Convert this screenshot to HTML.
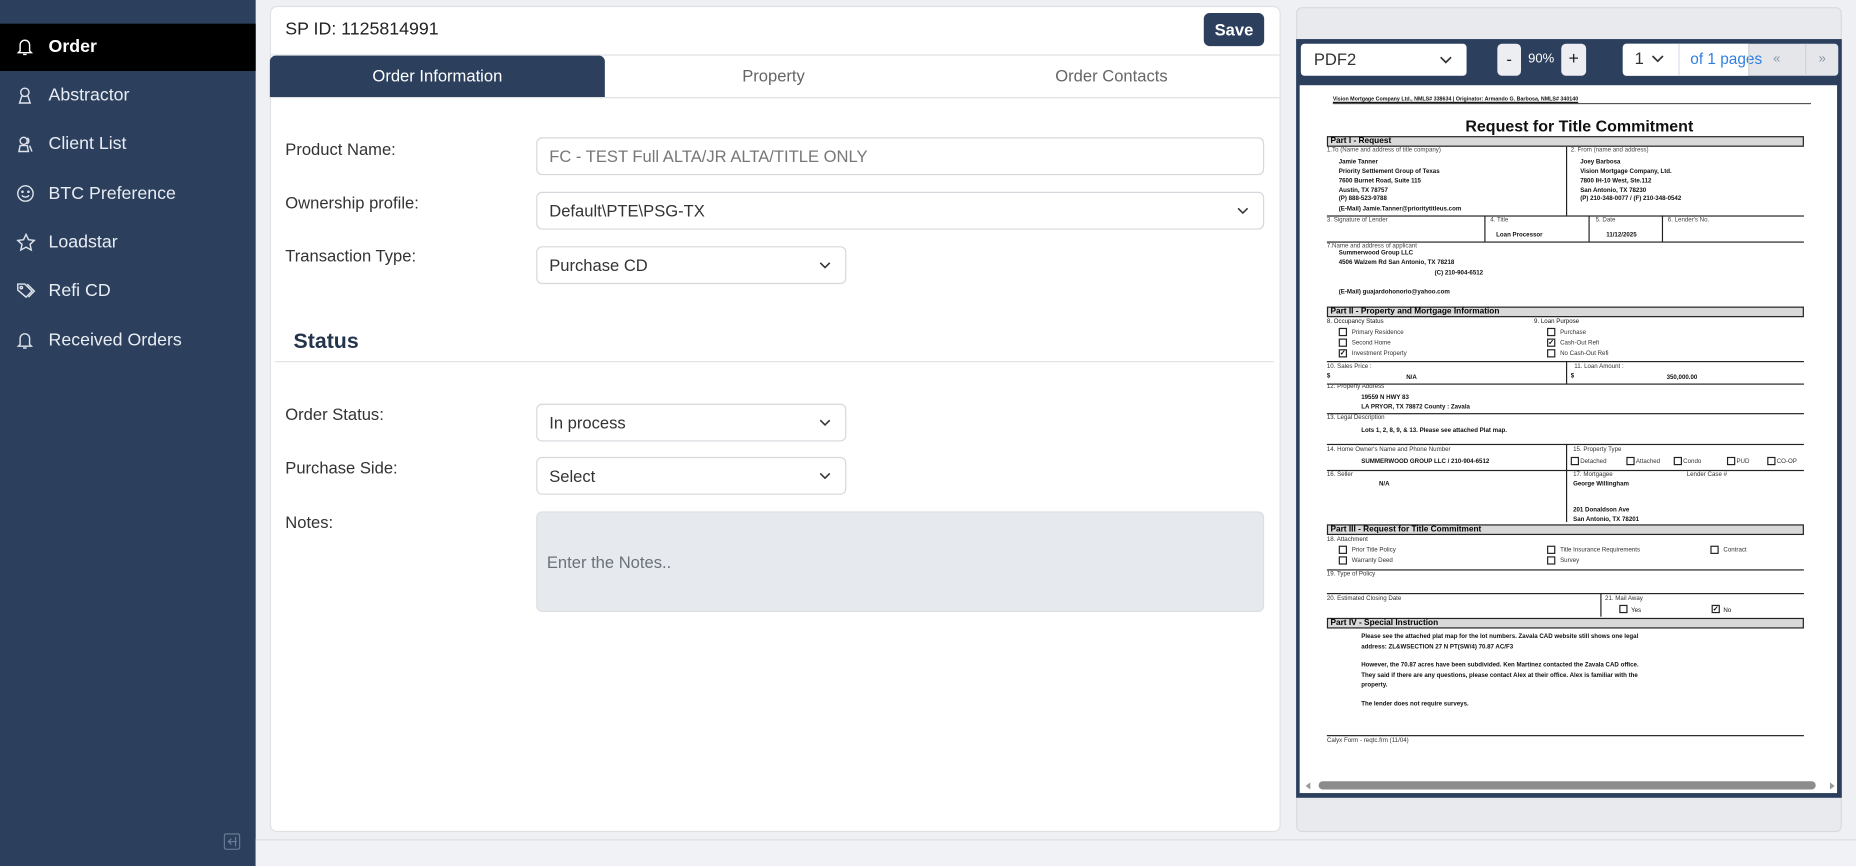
<!DOCTYPE html>
<html><head><meta charset="utf-8"><style>
*{box-sizing:border-box;margin:0;padding:0}
html,body{width:1856px;height:866px;overflow:hidden;background:#eef0f3}
#w{position:absolute;left:0;top:0;width:1568px;height:732px;transform:scale(1.18367);transform-origin:0 0;font-family:"Liberation Sans",sans-serif;}
.a{position:absolute}
.side{left:0;top:0;width:216px;height:732px;background:#2c405e}
.nav{left:0;width:216px;height:40px;color:#e9edf3;font-size:15px;line-height:40px;padding-left:41px}
.nav svg{position:absolute;left:14px;top:12px}
.card{left:228px;top:5px;width:854px;height:698px;background:#fff;border:1px solid #dfe1e4;border-radius:6px}
.lbl{font-size:14px;color:#333;left:241px}
.inp{left:453px;border:1px solid #d5d8dc;border-radius:5px;background:#fff;font-size:14px;color:#333;padding-left:10px;line-height:30px;height:32px}
.chev{position:absolute;right:12px;top:12px}
.t{position:absolute;font-family:"Liberation Sans",sans-serif;font-size:5.2px;color:#111;white-space:nowrap;line-height:6px}
.b{font-weight:bold}
.hl{position:absolute;height:1px;background:#222}
.vl{position:absolute;width:1px;background:#222}
.bar{position:absolute;left:1121px;width:403px;height:9px;background:#d9d9d9;border:1px solid #222;font-size:7px;font-weight:bold;line-height:7px;padding-left:2px;font-family:"Liberation Sans",sans-serif}
.cb{position:absolute;width:7px;height:7px;border:0.8px solid #222;font-size:6px;line-height:6px;text-align:center;font-weight:bold}
</style></head><body><div id="w">
<div class="a side"></div>
<div class="a nav" style="top:20px;background:#000;color:#fff;font-weight:bold"><svg width="14" height="16" viewBox="0 0 14 16" fill="none" stroke="#fff" stroke-width="1.2"><path d="M3 11V6a4 4 0 018 0v5l1.5 1.5h-11z"/><path d="M5.5 14h3"/></svg>Order</div>
<div class="a nav" style="top:61px"><svg width="14" height="16" viewBox="0 0 14 16" fill="none" stroke="#dfe4ec" stroke-width="1.2"><circle cx="7" cy="5" r="3.5"/><path d="M4.5 8l-1 3-1 3h9l-1-3-1-3"/></svg>Abstractor</div>
<div class="a nav" style="top:102px"><svg width="16" height="16" viewBox="0 0 16 16" fill="none" stroke="#dfe4ec" stroke-width="1.2"><circle cx="6" cy="5" r="3"/><path d="M2 14l1-5h6l1 5z"/><path d="M9 2.5a3 3 0 010 5M11 9l2 5"/></svg>Client List</div>
<div class="a nav" style="top:144px"><svg width="15" height="15" viewBox="0 0 15 15" fill="none" stroke="#dfe4ec" stroke-width="1.2"><circle cx="7.5" cy="7.5" r="6.5"/><path d="M4.5 9a3.5 3 0 006 0"/><circle cx="5" cy="6" r=".5"/><circle cx="10" cy="6" r=".5"/></svg>BTC Preference</div>
<div class="a nav" style="top:185px"><svg width="16" height="16" viewBox="0 0 16 16" fill="none" stroke="#dfe4ec" stroke-width="1.2"><path d="M8 1l2.1 4.5 4.9.6-3.6 3.3 1 4.8L8 11.8 3.6 14.2l1-4.8L1 6.1l4.9-.6z"/></svg>Loadstar</div>
<div class="a nav" style="top:226px"><svg width="16" height="16" viewBox="0 0 16 16" fill="none" stroke="#dfe4ec" stroke-width="1.2"><path d="M1 2h6l6 6-5 5-7-6z"/><path d="M9 2l6 6-5 5"/><circle cx="4" cy="5" r="1"/></svg>Refi CD</div>
<div class="a nav" style="top:268px"><svg width="14" height="16" viewBox="0 0 14 16" fill="none" stroke="#dfe4ec" stroke-width="1.2"><path d="M3 11V6a4 4 0 018 0v5l1.5 1.5h-11z"/><path d="M5.5 14h3"/></svg>Received Orders</div>
<svg class="a" style="left:189px;top:704px" width="14" height="14" viewBox="0 0 14 14" fill="none" stroke="#6c7f99" stroke-width="1"><rect x=".5" y=".5" width="13" height="13" rx="1.5"/><path d="M11 7H4M6.5 4.5L4 7l2.5 2.5M10 3v8"/></svg>

<div class="a" style="left:216px;top:709px;width:1352px;height:23px;background:#f1f2f5;border-top:1px solid #dcdee2"></div>
<div class="a card"></div>
<div class="a" style="left:241px;top:16px;font-size:15px;color:#222">SP ID: 1125814991</div>
<div class="a" style="left:1017px;top:11px;width:51px;height:28px;background:#2c405e;border-radius:5px;color:#fff;font-weight:bold;font-size:14px;text-align:center;line-height:28px">Save</div>
<div class="a" style="left:229px;top:46px;width:852px;height:1px;background:#dfe1e4"></div>
<div class="a" style="left:229px;top:82px;width:852px;height:1px;background:#dfe1e4"></div>
<div class="a" style="left:228px;top:47px;width:283px;height:35px;background:#2c405e;border-radius:5px 5px 0 0;color:#fff;font-size:14px;text-align:center;line-height:35px">Order Information</div>
<div class="a" style="left:511px;top:47px;width:285px;height:35px;color:#666;font-size:14px;text-align:center;line-height:35px">Property</div>
<div class="a" style="left:796px;top:47px;width:286px;height:35px;color:#666;font-size:14px;text-align:center;line-height:35px">Order Contacts</div>

<div class="a lbl" style="top:118px">Product Name:</div>
<div class="a inp" style="top:116px;width:615px;color:#777">FC - TEST Full ALTA/JR ALTA/TITLE ONLY</div>
<div class="a lbl" style="top:163px">Ownership profile:</div>
<div class="a inp" style="top:162px;width:615px">Default\PTE\PSG-TX<svg class="chev" width="10" height="6" viewBox="0 0 10 6" fill="none" stroke="#333" stroke-width="1.3"><path d="M1 1l4 4 4-4"/></svg></div>
<div class="a lbl" style="top:208px">Transaction Type:</div>
<div class="a inp" style="top:208px;width:262px">Purchase CD<svg class="chev" width="10" height="6" viewBox="0 0 10 6" fill="none" stroke="#333" stroke-width="1.3"><path d="M1 1l4 4 4-4"/></svg></div>
<div class="a" style="left:248px;top:278px;font-size:18px;color:#23344d;font-weight:bold">Status</div>
<div class="a" style="left:232px;top:305px;width:844px;height:1px;background:#dfe1e4"></div>
<div class="a lbl" style="top:342px">Order Status:</div>
<div class="a inp" style="top:341px;width:262px">In process<svg class="chev" width="10" height="6" viewBox="0 0 10 6" fill="none" stroke="#333" stroke-width="1.3"><path d="M1 1l4 4 4-4"/></svg></div>
<div class="a lbl" style="top:387px">Purchase Side:</div>
<div class="a inp" style="top:386px;width:262px">Select<svg class="chev" width="10" height="6" viewBox="0 0 10 6" fill="none" stroke="#333" stroke-width="1.3"><path d="M1 1l4 4 4-4"/></svg></div>
<div class="a lbl" style="top:433px">Notes:</div>
<div class="a" style="left:453px;top:432px;width:615px;height:85px;background:#e6e9ed;border:1px solid #dcdfe3;border-radius:5px;font-size:14px;color:#6b717a;padding:34px 0 0 8px">Enter the Notes..</div>

<!-- right panel -->
<div class="a" style="left:1095px;top:6px;width:461px;height:697px;background:#e8eaed;border:1px solid #d8dadd;border-radius:5px"></div>
<div class="a" style="left:1095px;top:33px;width:461px;height:641px;background:#2c405e"></div>
<div class="a" style="left:1099px;top:37px;width:140px;height:27px;background:#fff;border-radius:3px;font-size:14px;color:#333;line-height:27px;padding-left:11px">PDF2<svg class="chev" style="top:10px" width="11" height="7" viewBox="0 0 10 6" fill="none" stroke="#333" stroke-width="1.3"><path d="M1 1l4 4 4-4"/></svg></div>
<div class="a" style="left:1265px;top:37px;width:20px;height:27px;background:#eceef1;border-radius:4px;text-align:center;line-height:26px;font-size:14px;color:#222">-</div>
<div class="a" style="left:1291px;top:44px;font-size:11px;color:#fff">90%</div>
<div class="a" style="left:1319px;top:37px;width:21px;height:27px;background:#eceef1;border-radius:4px;text-align:center;line-height:26px;font-size:15px;color:#222">+</div>
<div class="a" style="left:1371px;top:37px;width:182px;height:27px;background:#e4e6ea;border-radius:3px"></div>
<div class="a" style="left:1371px;top:37px;width:106px;height:27px;background:#fff;border-radius:3px 0 0 3px"></div>
<div class="a" style="left:1381px;top:41px;font-size:14px;color:#333">1</div>
<svg class="a" style="left:1395px;top:46px" width="11" height="7" viewBox="0 0 10 6" fill="none" stroke="#333" stroke-width="1.3"><path d="M1 1l4 4 4-4"/></svg>
<div class="a" style="left:1418px;top:37px;width:1px;height:27px;background:#dde"></div>
<div class="a" style="left:1428px;top:42px;font-size:13px;color:#2f7fe0">of 1 pages</div>
<div class="a" style="left:1477px;top:37px;width:1px;height:27px;background:#d0d3d8"></div>
<div class="a" style="left:1477px;top:37px;width:48px;height:27px;font-size:11px;color:#8a96a8;text-align:center;line-height:27px">«</div>
<div class="a" style="left:1525px;top:37px;width:1px;height:27px;background:#d0d3d8"></div>
<div class="a" style="left:1526px;top:37px;width:27px;height:27px;font-size:11px;color:#8a96a8;text-align:center;line-height:27px">»</div>

<div class="a" style="left:1098px;top:72px;width:454px;height:598px;background:#fff"></div>
<!-- pdf content -->
<div class="t b" style="left:1126px;top:81px;font-size:4.5px;text-decoration:underline">Vision Mortgage Company Ltd., NMLS# 338634 | Originator: Armando G. Barbosa, NMLS# 340140</div>
<div class="hl" style="left:1126px;top:87px;width:404px;background:#555"></div>
<div class="t b" style="left:1238px;top:99px;font-size:13.5px;line-height:15px">Request for Title Commitment</div>
<div class="bar" style="top:115px">Part I - Request</div>
<div class="vl" style="left:1323px;top:124px;height:58px"></div>
<div class="t" style="left:1121px;top:124px;color:#444">1.To (Name and address of title company)</div>
<div class="t b" style="left:1131px;top:134px">Jamie Tanner</div>
<div class="t b" style="left:1131px;top:142px">Priority Settlement Group of Texas</div>
<div class="t b" style="left:1131px;top:150px">7600 Burnet Road, Suite 115</div>
<div class="t b" style="left:1131px;top:158px">Austin, TX 78757</div>
<div class="t b" style="left:1131px;top:165px">(P) 888-523-9788</div>
<div class="t b" style="left:1131px;top:174px">(E-Mail) Jamie.Tanner@prioritytitleus.com</div>
<div class="t" style="left:1327px;top:124px;color:#444">2. From (name and address)</div>
<div class="t b" style="left:1335px;top:134px">Joey Barbosa</div>
<div class="t b" style="left:1335px;top:142px">Vision Mortgage Company, Ltd.</div>
<div class="t b" style="left:1335px;top:150px">7800 IH-10 West, Ste.112</div>
<div class="t b" style="left:1335px;top:158px">San Antonio,  TX  78230</div>
<div class="t b" style="left:1335px;top:165px">(P) 210-348-0077 / (F) 210-348-0542</div>
<div class="hl" style="left:1121px;top:182px;width:403px"></div>
<div class="t" style="left:1121px;top:183px;color:#444">3. Signature of Lender</div>
<div class="vl" style="left:1254px;top:182px;height:22px"></div>
<div class="t" style="left:1259px;top:183px;color:#444">4. Title</div>
<div class="t b" style="left:1264px;top:196px">Loan Processor</div>
<div class="vl" style="left:1342px;top:182px;height:22px"></div>
<div class="t" style="left:1348px;top:183px;color:#444">5. Date</div>
<div class="t b" style="left:1357px;top:196px">11/12/2025</div>
<div class="vl" style="left:1404px;top:182px;height:22px"></div>
<div class="t" style="left:1409px;top:183px;color:#444">6. Lender's No.</div>
<div class="hl" style="left:1121px;top:204px;width:403px"></div>
<div class="t" style="left:1121px;top:205px;color:#444">7.Name and address of applicant</div>
<div class="t b" style="left:1131px;top:211px">Summerwood Group LLC</div>
<div class="t b" style="left:1131px;top:219px">4506 Walzem Rd   San Antonio, TX 78218</div>
<div class="t b" style="left:1212px;top:228px">(C) 210-904-6512</div>
<div class="t b" style="left:1131px;top:244px">(E-Mail) guajardohonorio@yahoo.com</div>
<div class="bar" style="top:259px">Part II - Property and Mortgage Information</div>
<div class="t" style="left:1121px;top:269px">8. Occupancy Status</div>
<div class="t" style="left:1296px;top:269px">9. Loan Purpose</div>
<div class="cb" style="left:1131px;top:277px"></div><div class="t" style="left:1142px;top:278px;color:#333">Primary Residence</div>
<div class="cb" style="left:1131px;top:286px"></div><div class="t" style="left:1142px;top:287px;color:#333">Second Home</div>
<div class="cb" style="left:1131px;top:295px">✓</div><div class="t" style="left:1142px;top:296px;color:#333">Investment Property</div>
<div class="cb" style="left:1307px;top:277px"></div><div class="t" style="left:1318px;top:278px;color:#333">Purchase</div>
<div class="cb" style="left:1307px;top:286px">✓</div><div class="t" style="left:1318px;top:287px;color:#333">Cash-Out Refi</div>
<div class="cb" style="left:1307px;top:295px"></div><div class="t" style="left:1318px;top:296px;color:#333">No Cash-Out Refi</div>
<div class="hl" style="left:1121px;top:305px;width:403px"></div>
<div class="vl" style="left:1323px;top:305px;height:19px"></div>
<div class="t" style="left:1121px;top:307px;color:#333">10. Sales Price :</div>
<div class="t b" style="left:1121px;top:315px">$</div><div class="t b" style="left:1188px;top:316px">N/A</div>
<div class="t" style="left:1330px;top:307px;color:#333">11.  Loan Amount :</div>
<div class="t b" style="left:1327px;top:315px">$</div><div class="t b" style="left:1408px;top:316px">350,000.00</div>
<div class="hl" style="left:1121px;top:324px;width:403px"></div>
<div class="t" style="left:1121px;top:324px;color:#333">12. Property Address</div>
<div class="t b" style="left:1150px;top:333px">19559 N HWY 83</div>
<div class="t b" style="left:1150px;top:341px">LA PRYOR, TX 78872  County : Zavala</div>
<div class="hl" style="left:1121px;top:349px;width:403px"></div>
<div class="t" style="left:1121px;top:350px;color:#333">13. Legal Description</div>
<div class="t b" style="left:1150px;top:361px">Lots 1, 2, 8, 9, &amp; 13. Please see attached Plat map.</div>
<div class="hl" style="left:1121px;top:375px;width:403px"></div>
<div class="vl" style="left:1323px;top:375px;height:66px"></div>
<div class="t" style="left:1121px;top:377px;color:#333">14. Home Owner's Name and Phone Number</div>
<div class="t b" style="left:1150px;top:387px">SUMMERWOOD GROUP LLC / 210-904-6512</div>
<div class="t" style="left:1329px;top:377px;color:#333">15. Property Type</div>
<div class="cb" style="left:1327px;top:386px"></div><div class="t" style="left:1335px;top:387px;color:#333">Detached</div>
<div class="cb" style="left:1374px;top:386px"></div><div class="t" style="left:1382px;top:387px;color:#333">Attached</div>
<div class="cb" style="left:1414px;top:386px"></div><div class="t" style="left:1422px;top:387px;color:#333">Condo</div>
<div class="cb" style="left:1459px;top:386px"></div><div class="t" style="left:1467px;top:387px;color:#333">PUD</div>
<div class="cb" style="left:1493px;top:386px"></div><div class="t" style="left:1501px;top:387px;color:#333">CO-OP</div>
<div class="hl" style="left:1121px;top:397px;width:403px"></div>
<div class="t" style="left:1121px;top:398px;color:#333">16. Seller</div>
<div class="t b" style="left:1165px;top:406px">N/A</div>
<div class="t" style="left:1329px;top:398px;color:#333">17. Mortgagee</div>
<div class="t" style="left:1425px;top:398px;color:#333">Lender Case #</div>
<div class="t b" style="left:1329px;top:406px">George Willingham</div>
<div class="t b" style="left:1329px;top:428px">201 Donaldson Ave</div>
<div class="t b" style="left:1329px;top:436px">San Antonio, TX 78201</div>
<div class="bar" style="top:443px">Part III - Request for Title Commitment</div>
<div class="t" style="left:1121px;top:453px;color:#333">18. Attachment</div>
<div class="cb" style="left:1131px;top:461px"></div><div class="t" style="left:1142px;top:462px;color:#333">Prior Title Policy</div>
<div class="cb" style="left:1307px;top:461px"></div><div class="t" style="left:1318px;top:462px;color:#333">Title Insurance Requirements</div>
<div class="cb" style="left:1445px;top:461px"></div><div class="t" style="left:1456px;top:462px;color:#333">Contract</div>
<div class="cb" style="left:1131px;top:470px"></div><div class="t" style="left:1142px;top:471px;color:#333">Warranty Deed</div>
<div class="cb" style="left:1307px;top:470px"></div><div class="t" style="left:1318px;top:471px;color:#333">Survey</div>
<div class="hl" style="left:1121px;top:481px;width:403px"></div>
<div class="t" style="left:1121px;top:482px;color:#333">19. Type of Policy</div>
<div class="hl" style="left:1121px;top:501px;width:403px"></div>
<div class="vl" style="left:1352px;top:501px;height:20px"></div>
<div class="t" style="left:1121px;top:503px;color:#333">20. Estimated Closing Date</div>
<div class="t" style="left:1356px;top:503px;color:#333">21. Mail Away</div>
<div class="cb" style="left:1368px;top:511px"></div><div class="t" style="left:1378px;top:513px">Yes</div>
<div class="cb" style="left:1446px;top:511px">✓</div><div class="t" style="left:1456px;top:513px">No</div>
<div class="bar" style="top:522px">Part IV - Special Instruction</div>
<div class="t b" style="left:1150px;top:535px">Please see the attached plat map for the lot numbers. Zavala CAD website still shows one legal</div>
<div class="t b" style="left:1150px;top:544px">address: ZL&amp;WSECTION 27 N PT(SW/4) 70.87 AC/F3</div>
<div class="t b" style="left:1150px;top:559px">However, the 70.87 acres have been subdivided. Ken Martinez contacted the Zavala CAD office.</div>
<div class="t b" style="left:1150px;top:568px">They said if there are any questions, please contact Alex at their office. Alex is familiar with the</div>
<div class="t b" style="left:1150px;top:576px">property.</div>
<div class="t b" style="left:1150px;top:592px">The lender does not require surveys.</div>
<div class="hl" style="left:1121px;top:621px;width:403px"></div>
<div class="t" style="left:1121px;top:623px;color:#333">Calyx Form - reqtc.frm (11/04)</div>
<div class="a" style="left:1114px;top:660px;width:420px;height:7px;background:#8c8c8c;border-radius:4px"></div>
<div class="a" style="left:1103px;top:661px;width:0;height:0;border-top:3px solid transparent;border-bottom:3px solid transparent;border-right:4px solid #999"></div>
<div class="a" style="left:1546px;top:661px;width:0;height:0;border-top:3px solid transparent;border-bottom:3px solid transparent;border-left:4px solid #999"></div>
</div></body></html>
